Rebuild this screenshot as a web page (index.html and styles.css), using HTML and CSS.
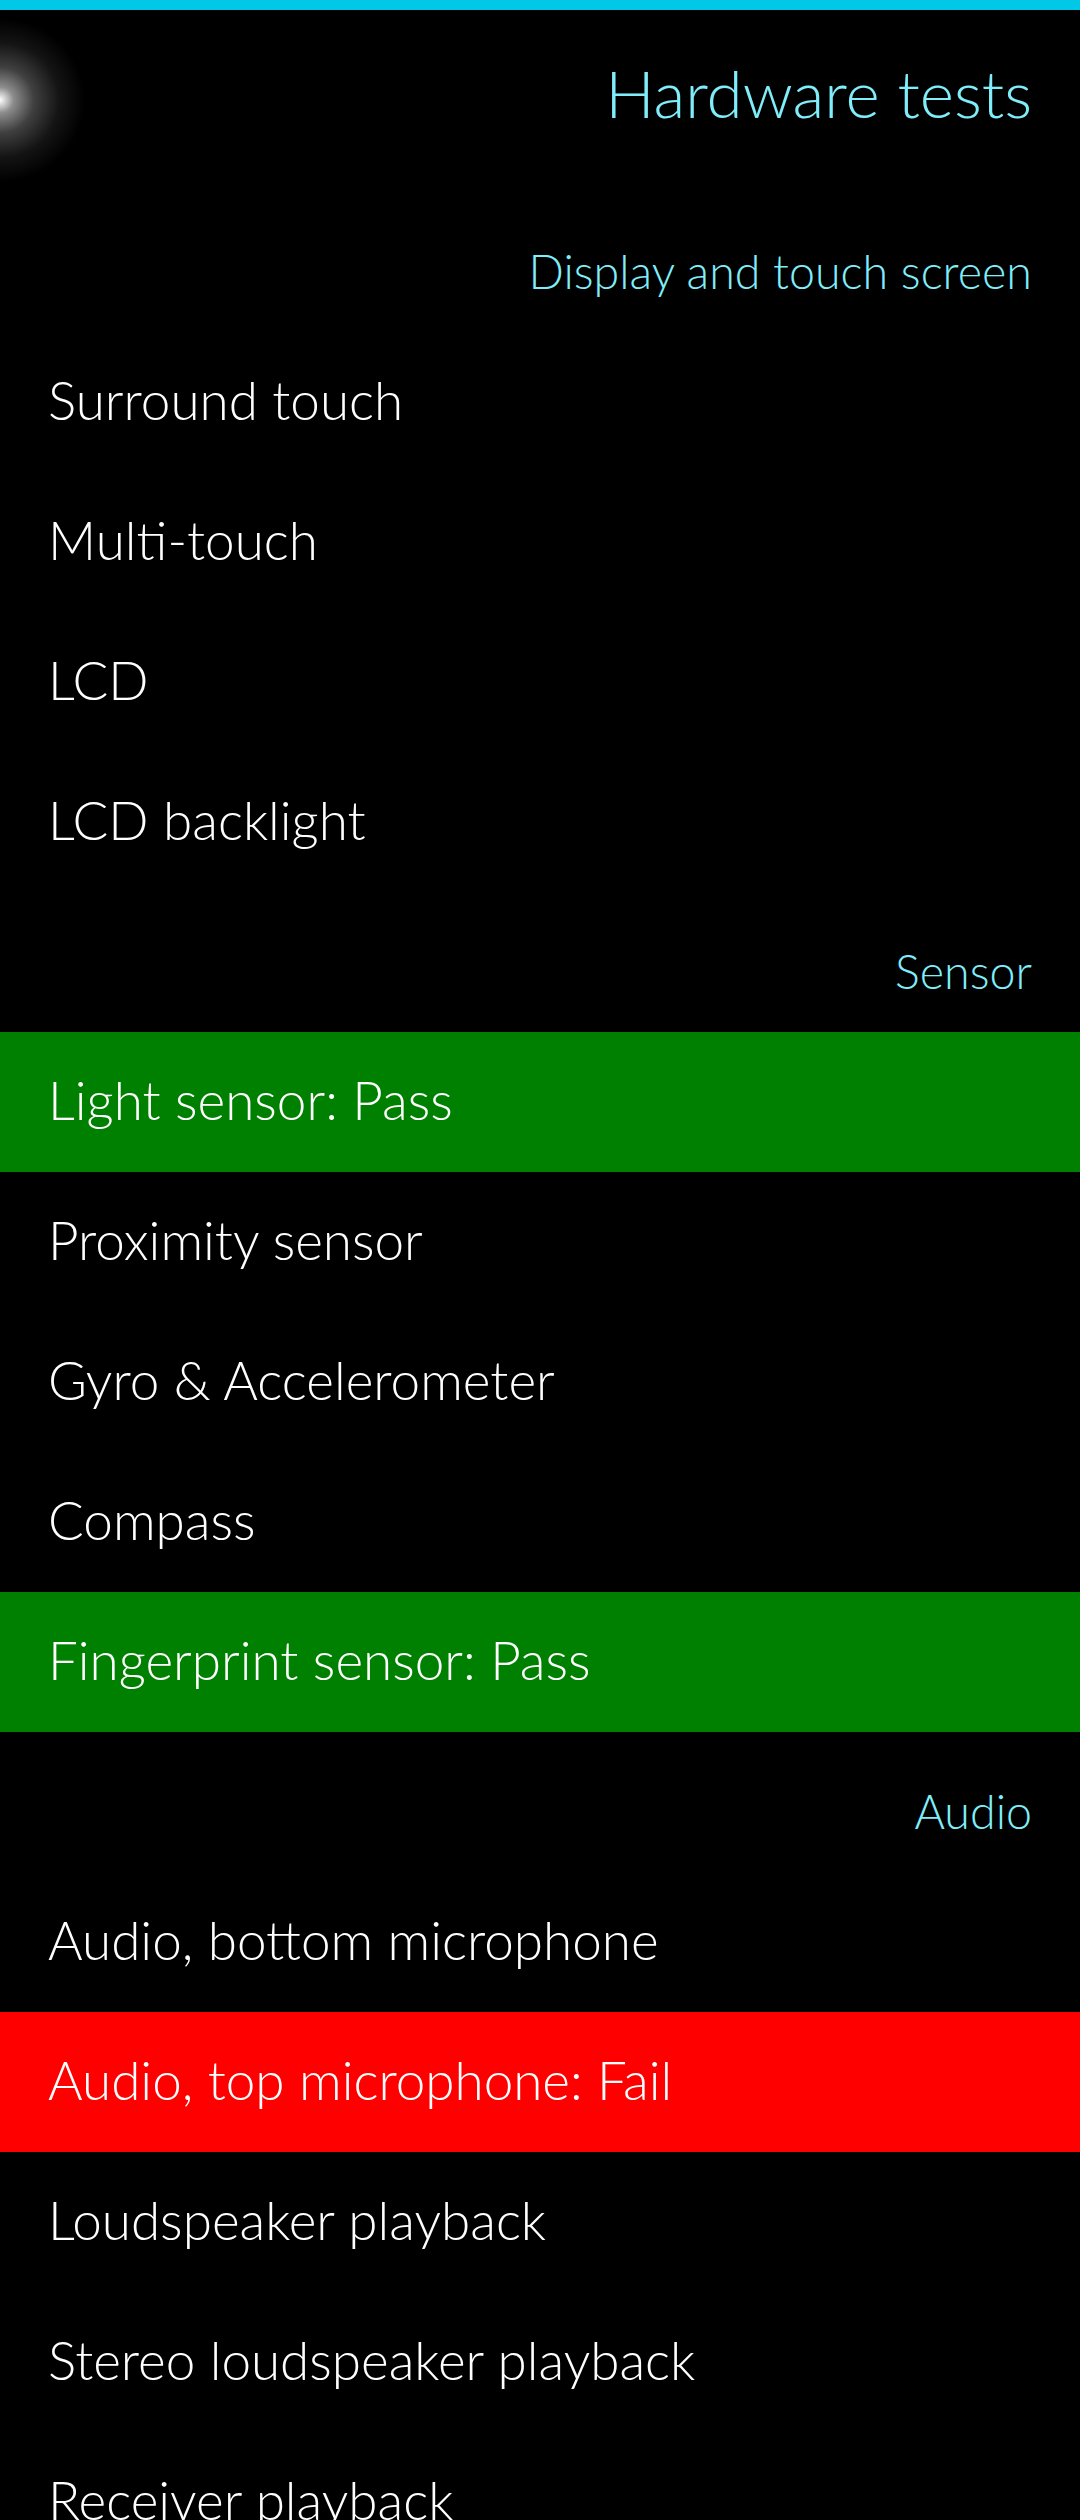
FILE: index.html
```html
<!DOCTYPE html>
<html>
<head>
<meta charset="utf-8">
<link rel="stylesheet" href="styles.css">
</head>
<body>
<div class="topbar"></div>
<header class="page-header">
  <div class="glow"></div>
  <h1 class="title">Hardware tests</h1>
</header>
<main class="list">
  <div class="section">Display and touch screen</div>
  <div class="item">Surround touch</div>
  <div class="item">Multi-touch</div>
  <div class="item">LCD</div>
  <div class="item">LCD backlight</div>
  <div class="section">Sensor</div>
  <div class="item pass">Light sensor: Pass</div>
  <div class="item">Proximity sensor</div>
  <div class="item">Gyro &amp; Accelerometer</div>
  <div class="item">Compass</div>
  <div class="item pass">Fingerprint sensor: Pass</div>
  <div class="section">Audio</div>
  <div class="item">Audio, bottom microphone</div>
  <div class="item fail">Audio, top microphone: Fail</div>
  <div class="item">Loudspeaker playback</div>
  <div class="item">Stereo loudspeaker playback</div>
  <div class="item">Receiver playback</div>
</main>
</body>
</html>
```
FILE: styles.css
```css
html, body {
  margin: 0;
  padding: 0;
  background: #000;
}
body {
  width: 1080px;
  height: 2520px;
  overflow: hidden;
  font-family: "Lato", "Roboto", sans-serif;
  font-weight: 300;
  color: #fff;
}
.topbar {
  height: 10px;
  background: #00c8e6;
}
.page-header {
  position: relative;
  height: 182px;
  box-sizing: border-box;
  padding: 33px 48px 0 48px;
}
.glow {
  position: absolute;
  left: 0;
  top: 5px;
  width: 110px;
  height: 170px;
  background: radial-gradient(ellipse 85px 82px at 0 50%, rgba(255,255,255,1) 0%, rgba(255,255,255,0.55) 16%, rgba(255,255,255,0.25) 40%, rgba(255,255,255,0.08) 70%, rgba(255,255,255,0) 100%);
}
.title {
  margin: 0;
  text-align: right;
  font-size: 65.5px;
  font-weight: 300;
  line-height: 100px;
  color: #80eefa;
}
.list {
  display: flex;
  flex-direction: column;
}
.section {
  height: 140px;
  box-sizing: border-box;
  padding: 29px 48px 11px 48px;
  text-align: right;
  font-size: 46.6px;
  line-height: 100px;
  color: #80eefa;
}
.item {
  height: 140px;
  box-sizing: border-box;
  padding: 0 48px 4px 48px;
  font-size: 53px;
  line-height: 136px;
  white-space: nowrap;
}
.item.pass {
  background: #008000;
}
.item.fail {
  background: #ff0000;
}
```
